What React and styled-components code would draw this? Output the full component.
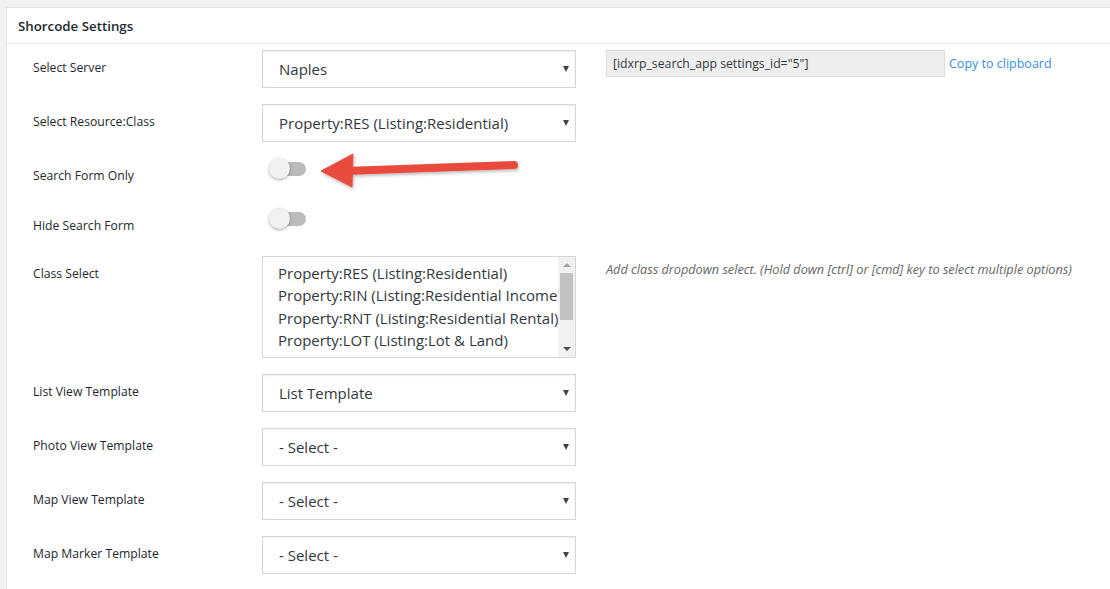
import React from "react";
import styled, { createGlobalStyle } from "styled-components";

const GlobalStyle = createGlobalStyle`
  html, body {
    margin: 0;
    padding: 0;
    background: #f1f1f1;
    font-family: "Open Sans", "Noto Sans", sans-serif;
    color: #23282d;
    overflow: hidden;
  }
`;

const classOptions = [
  "Property:RES (Listing:Residential)",
  "Property:RIN (Listing:Residential Income)",
  "Property:RNT (Listing:Residential Rental)",
  "Property:LOT (Listing:Lot & Land)",
  "Property:COM (Listing:Commercial Sale)",
];

function SelectBox({ value }) {
  return (
    <SelectWrap>
      <Select defaultValue={value}>
        <option>{value}</option>
      </Select>
      <Caret />
    </SelectWrap>
  );
}

function Toggle() {
  return (
    <ToggleWrap>
      <Track />
      <Knob />
    </ToggleWrap>
  );
}

function ClassList() {
  return (
    <ListBox>
      <Options>
        {classOptions.map((o) => (
          <Option key={o}>{o}</Option>
        ))}
      </Options>
      <ScrollBar>
        <ScrollButton>
          <TinyArrow $up />
        </ScrollButton>
        <ScrollTrack>
          <Thumb />
        </ScrollTrack>
        <ScrollButton>
          <TinyArrow />
        </ScrollButton>
      </ScrollBar>
    </ListBox>
  );
}

function PointerArrow() {
  return (
    <ArrowSvg width="220" height="50" viewBox="310 145 220 50">
      <defs>
        <filter id="arrowShadow" x="-10%" y="-40%" width="120%" height="180%">
          <feDropShadow dx="1" dy="2" stdDeviation="1.5" floodColor="#000" floodOpacity="0.25" />
        </filter>
      </defs>
      <g filter="url(#arrowShadow)" fill="#e84c3d" stroke="#e84c3d">
        <line x1="345" y1="171" x2="514" y2="165" strokeWidth="8" strokeLinecap="round" />
        <polygon points="321,171 353,154 352,187" strokeWidth="1" strokeLinejoin="round" />
      </g>
    </ArrowSvg>
  );
}

export default function App() {
  return (
    <Page>
      <GlobalStyle />
      <Panel>
        <PanelHeader>Shorcode Settings</PanelHeader>
        <Form>
          <Row>
            <Label>Select Server</Label>
            <SelectBox value="Naples" />
            <Extra>
              <ShortcodeInput readOnly value={'[idxrp_search_app settings_id="5"]'} />
              <CopyLink href="#">Copy to clipboard</CopyLink>
            </Extra>
          </Row>
          <Row>
            <Label>Select Resource:Class</Label>
            <SelectBox value="Property:RES (Listing:Residential)" />
          </Row>
          <Row $h={34}>
            <Label>Search Form Only</Label>
            <Toggle />
            <PointerArrow />
          </Row>
          <Row $h={32}>
            <Label>Hide Search Form</Label>
            <Toggle />
          </Row>
          <Row>
            <Label>Class Select</Label>
            <ClassList />
            <Extra>
              <Help>Add class dropdown select. (Hold down [ctrl] or [cmd] key to select multiple options)</Help>
            </Extra>
          </Row>
          <Row>
            <Label>List View Template</Label>
            <SelectBox value="List Template" />
          </Row>
          <Row>
            <Label>Photo View Template</Label>
            <SelectBox value="- Select -" />
          </Row>
          <Row>
            <Label>Map View Template</Label>
            <SelectBox value="- Select -" />
          </Row>
          <Row>
            <Label>Map Marker Template</Label>
            <SelectBox value="- Select -" />
          </Row>
        </Form>
      </Panel>
    </Page>
  );
}

const Page = styled.div`
  padding: 7px 0 0 6px;
  height: 589px;
  box-sizing: border-box;
`;

const Panel = styled.section`
  background: #fff;
  border: 1px solid #e5e5e5;
  border-right: none;
  min-height: 700px;
`;

const PanelHeader = styled.h2`
  margin: 0;
  height: 35px;
  padding: 0 11px;
  display: flex;
  align-items: center;
  font-size: 13.3px;
  font-weight: 600;
  color: #23282d;
  border-bottom: 1px solid #eee;
`;

const Form = styled.div`
  padding: 6px 0 0 26px;
  display: flex;
  flex-direction: column;
  gap: 16px;
`;

const Row = styled.div`
  position: relative;
  display: grid;
  grid-template-columns: 229px 314px 1fr;
  align-items: start;
  min-height: ${(p) => (p.$h ? `${p.$h}px` : "auto")};
`;

const Label = styled.div`
  padding-top: 9px;
  font-size: 12.2px;
  line-height: 18px;
  color: #23282d;
`;

const SelectWrap = styled.div`
  position: relative;
  width: 314px;
`;

const Select = styled.select`
  appearance: none;
  width: 100%;
  height: 38px;
  padding: 0 30px 0 16px;
  border: 1px solid #d4d6da;
  border-radius: 0;
  background: #fff;
  box-shadow: inset 0 1px 2px rgba(0, 0, 0, 0.07);
  font-family: "Open Sans", "Noto Sans", sans-serif;
  font-size: 15px;
  color: #32373c;
  outline: none;
`;

const Caret = styled.span`
  position: absolute;
  right: 7px;
  top: 16px;
  width: 0;
  height: 0;
  border-left: 3.5px solid transparent;
  border-right: 3.5px solid transparent;
  border-top: 6px solid #444;
  pointer-events: none;
`;

const Extra = styled.div`
  padding-left: 30px;
  display: flex;
  align-items: center;
  gap: 4px;
`;

const ShortcodeInput = styled.input`
  width: 339px;
  height: 27px;
  box-sizing: border-box;
  padding: 0 6px;
  border: 1px solid #ddd;
  border-top-color: #d6d6d6;
  background: #eee;
  font-family: "Open Sans", "Noto Sans", sans-serif;
  font-size: 12.25px;
  color: #32373c;
  outline: none;
`;

const CopyLink = styled.a`
  font-size: 12.5px;
  color: #3b8fe4;
  text-decoration: none;
`;

const Help = styled.p`
  margin: 4px 0 0;
  font-size: 12.7px;
  font-style: italic;
  color: #666;
  white-space: nowrap;
`;

const ToggleWrap = styled.div`
  position: relative;
  width: 44px;
  height: 21px;
  margin-left: 7px;
`;

const Track = styled.div`
  position: absolute;
  left: 3px;
  top: 4px;
  width: 34px;
  height: 14px;
  border-radius: 7px;
  background: #bbb;
`;

const Knob = styled.div`
  position: absolute;
  left: 0;
  top: 0;
  width: 21px;
  height: 21px;
  border-radius: 50%;
  background: #f1f1f1;
  box-shadow: 0 1px 3px rgba(0, 0, 0, 0.35);
`;

const ArrowSvg = styled.svg`
  position: absolute;
  left: 277px;
  top: -13px;
  overflow: visible;
`;

const ListBox = styled.div`
  width: 314px;
  height: 102px;
  box-sizing: border-box;
  border: 1px solid #d4d6da;
  display: flex;
  background: #fff;
`;

const Options = styled.div`
  flex: 1;
  overflow: hidden;
  padding: 5px 0 0 15px;
`;

const Option = styled.div`
  font-size: 15px;
  line-height: 22.3px;
  color: #32373c;
  white-space: nowrap;
`;

const ScrollBar = styled.div`
  width: 17px;
  background: #f1f1f1;
  display: flex;
  flex-direction: column;
`;

const ScrollButton = styled.div`
  height: 16px;
  display: flex;
  align-items: center;
  justify-content: center;
`;

const TinyArrow = styled.span`
  width: 0;
  height: 0;
  border-left: 4px solid transparent;
  border-right: 4px solid transparent;
  ${(p) =>
    p.$up ? "border-bottom: 4px solid #a3a3a3;" : "border-top: 4px solid #505050;"}
`;

const ScrollTrack = styled.div`
  flex: 1;
  padding: 0 2px;
`;

const Thumb = styled.div`
  height: 47px;
  background: #c1c1c1;
`;
